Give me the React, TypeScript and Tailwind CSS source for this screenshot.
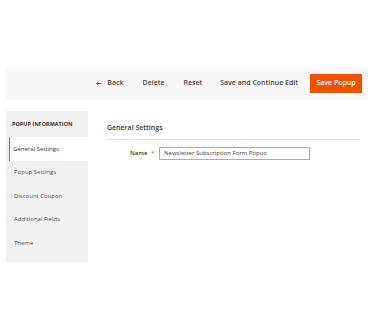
export default function App() {
	const tabs = [
		"General Settings",
		"Popup Settings",
		"Discount Coupon",
		"Additional Fields",
		"Theme",
	];

	return (
		<div
			className="w-[374px] h-[328px] bg-white text-[#41362f]"
			style={{ fontFamily: "'Open Sans', sans-serif" }}>
			<div className="pt-[67px] px-[6px]">
				{/* Page actions */}
				<div className="h-[33px] bg-[#f8f8f8] flex items-center justify-end pr-[6px] text-[7px] font-semibold text-[#514943]">
					<span className="flex items-center gap-[5px] mr-[19px]">
						<svg width="6" height="5" viewBox="0 0 6 5" fill="none">
							<path
								d="M5.5 2.5H0.8M2.6 0.6L0.7 2.5L2.6 4.4"
								stroke="#514943"
								strokeWidth="0.9"
							/>
						</svg>
						Back
					</span>
					<span className="mr-[19px]">Delete</span>
					<span className="mr-[18px]">Reset</span>
					<span className="mr-[12px]">Save and Continue Edit</span>
					<span className="h-[19px] w-[52px] bg-[#eb5202] text-white flex items-center justify-center">
						Save Popup
					</span>
				</div>

				<div className="flex mt-[11px]">
					{/* Sidebar */}
					<div className="w-[82px] h-[150px] bg-[#f1f1f1] shadow-[0_1px_1px_rgba(0,0,0,0.05)]">
						<div className="h-[26px] flex items-center pl-[6px] text-[5.5px] font-bold text-[#41362f]">
							POPUP INFORMATION
						</div>
						{tabs.map((tab, i) => (
							<div
								key={tab}
								className={
									i === 0
										? "h-[24px] ml-[3px] bg-white border-l-[1.5px] border-[#eb5202] flex items-center pl-[3px] text-[6px] text-[#41362f]"
										: "h-[23.5px] flex items-center pl-[8px] text-[6px] text-[#5a5350]"
								}>
								{tab}
							</div>
						))}
					</div>

					{/* Content */}
					<div className="flex-1 pl-[19px] pr-[8px] pt-[12px]">
						<div className="pb-[5px] border-b border-[#e3e3e3] text-[7px] font-semibold text-[#41362f]">
							General Settings
						</div>
						<div className="flex items-center mt-[7px]">
							<span className="ml-[23px] w-[21px] text-[6px] font-semibold text-[#41362f]">
								Name
							</span>
							<span className="w-[8px] text-[6px] text-[#eb5202]">*</span>
							<div className="w-[151px] h-[13px] border border-[#adadad] bg-white flex items-center pl-[4px] text-[6px] text-[#41362f]">
								Newsletter Subscription Form Popuo
							</div>
						</div>
					</div>
				</div>
			</div>
		</div>
	);
}
